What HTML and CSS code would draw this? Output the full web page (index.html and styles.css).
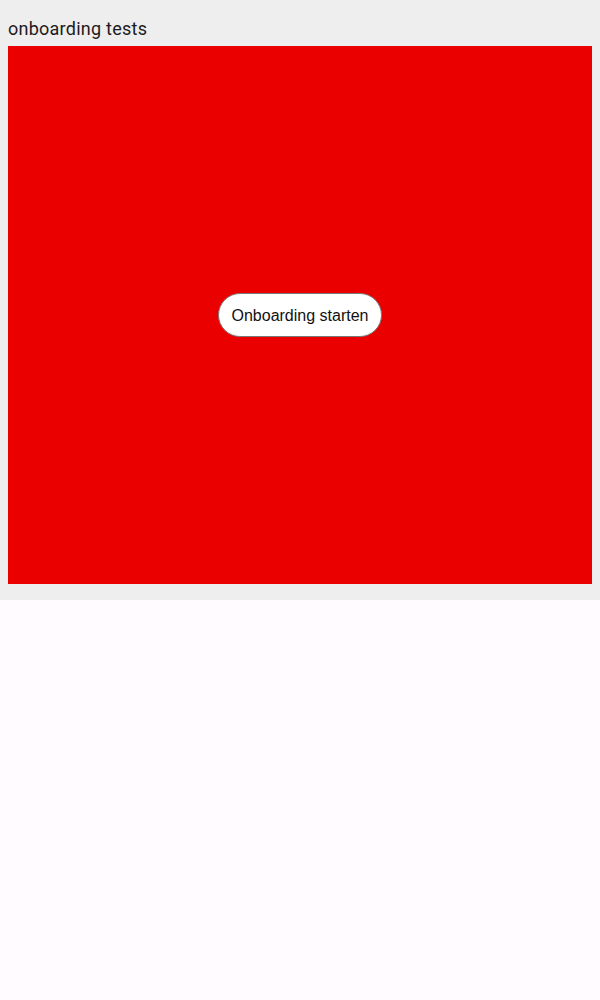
FILE: index.html
```html
<!DOCTYPE html>
<html>
<head>
<meta charset="utf-8">
<link rel="stylesheet" href="styles.css">
</head>
<body>
<section class="panel">
  <h1 class="title">onboarding tests</h1>
  <div class="stage">
    <button class="start">Onboarding starten</button>
  </div>
</section>
</body>
</html>
```
FILE: styles.css
```css
html, body {
  margin: 0;
  padding: 0;
  background: #fffbfe;
}
.panel {
  background: #eeeeee;
  padding: 17px 8px 16px;
  height: 600px;
  box-sizing: border-box;
  display: flex;
  flex-direction: column;
}
.title {
  margin: 0 0 5px;
  font-family: Roboto, sans-serif;
  font-weight: 400;
  font-size: 18px;
  line-height: 24px;
  letter-spacing: 0.25px;
  color: #1d1b20;
}
.stage {
  background: #eb0000;
  height: 538px;
  display: flex;
  align-items: center;
  justify-content: center;
}
.start {
  width: 164px;
  height: 44px;
  border: 1px solid #7a7a7a;
  border-radius: 22px;
  background: #ffffff;
  font-family: "Liberation Sans", Arial, sans-serif;
  font-size: 16px;
  color: #111111;
  padding: 2px 0 0;
}
```
